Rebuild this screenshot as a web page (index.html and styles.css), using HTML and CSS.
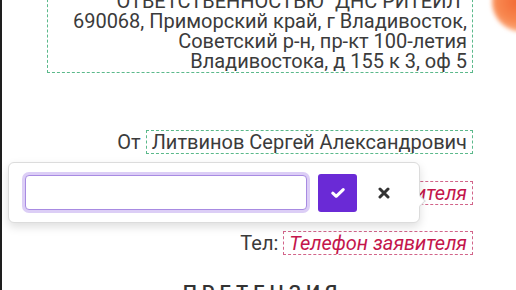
FILE: index.html
```html
<!DOCTYPE html>
<html lang="ru">
<head>
    <meta charset="UTF-8">
    <meta name="viewport" content="width=device-width, initial-scale=1.0">
    <title>Претензия</title>
    <link rel="stylesheet" href="styles.css">
</head>
<body>
    <!-- document sheet -->
    <div class="sheet">
        <div class="recipient">
            <div class="field field-filled">ОТВЕТСТВЕННОСТЬЮ "ДНС РИТЕЙЛ"<br>690068, Приморский край, г Владивосток,<br>Советский р-н, пр-кт 100-летия<br>Владивостока, д 155 к 3, оф 5</div>
        </div>

        <div class="row">
            <span class="label">От</span>
            <span class="field field-filled">Литвинов Сергей Александрович</span>
        </div>
        <div class="row">
            <span class="label">Адрес:</span>
            <span class="field field-empty">Адрес заявителя</span>
        </div>
        <div class="row">
            <span class="label">Тел:</span>
            <span class="field field-empty">Телефон заявителя</span>
        </div>

        <h2 class="title">ПРЕТЕНЗИЯ</h2>
    </div>

    <!-- inline editor popup over the field -->
    <div class="editor">
        <input type="text" class="editor-input">
        <button class="btn-ok" type="button">
            <svg width="14" height="10" viewBox="0 0 14 10"><path d="M1.8 5.2 L5.2 8.3 L12.2 1.6" fill="none" stroke="#fff" stroke-width="3" stroke-linecap="round" stroke-linejoin="round"/></svg>
        </button>
        <button class="btn-cancel" type="button">
            <svg width="12" height="12" viewBox="0 0 12 12"><path d="M2 2 L10 10 M10 2 L2 10" fill="none" stroke="#333" stroke-width="3" stroke-linecap="round"/></svg>
        </button>
    </div>

    <div class="fab"></div>
</body>
</html>
```

FILE: styles.css
```css
body {
    margin: 0;
    background-color: #fff;
    border-left: 2px solid #1e1e1e;
    height: 290px;
    overflow: hidden;
    position: relative;
    font-family: Roboto, "Noto Sans", sans-serif;
    color: #3b3b3b;
}

.sheet {
    padding: 0 43px 0 45px;
}

/* recipient block, top line is scrolled away */
.recipient {
    margin-top: -11px;
    text-align: right;
}

.field {
    font-size: 20px;
    line-height: 20px;
    padding: 1px 5px;
    border: 1px dashed #5bb98b;
}

.field-empty {
    color: #c4164c;
    font-style: italic;
    border-color: #d2648a;
}

.row {
    display: flex;
    justify-content: flex-end;
    align-items: center;
    gap: 5px;
    margin-top: 26.5px;
    font-size: 20px;
}

.recipient + .row {
    margin-top: 57px;
}

.label {
    line-height: 20px;
}

.title {
    margin: 26px 0 0;
    padding-left: 5px;
    text-align: center;
    font-size: 20px;
    line-height: 24px;
    font-weight: 500;
    letter-spacing: 5px;
    color: #333;
}

/* popup editor */
.editor {
    position: absolute;
    left: 6px;
    top: 162px;
    width: 394px;
    height: 59px;
    display: flex;
    align-items: center;
    padding-left: 16px;
    background: #fff;
    border: 1px solid #dcdcdc;
    border-radius: 6px;
    box-shadow: 0 4px 10px rgba(0, 0, 0, 0.13);
}

.editor::after {
    content: "";
    position: absolute;
    right: -5px;
    top: 34px;
    width: 7px;
    height: 7px;
    background: #fff;
    border-top: 1px solid #dcdcdc;
    border-right: 1px solid #dcdcdc;
    transform: rotate(45deg);
}

.editor-input {
    width: 282px;
    height: 35px;
    box-sizing: border-box;
    border: 1px solid #a88be2;
    border-radius: 4px;
    box-shadow: 0 0 0 3px #dccef6;
    outline: none;
    background: #fff;
}

.btn-ok {
    margin-left: 11px;
    width: 39px;
    height: 38px;
    border: none;
    border-radius: 3px;
    background-color: #6a2ad6;
    display: flex;
    align-items: center;
    justify-content: center;
    padding: 0;
}

.btn-cancel {
    margin-left: 7px;
    width: 40px;
    height: 38px;
    border: none;
    background: none;
    display: flex;
    align-items: center;
    justify-content: center;
    padding: 0;
}

.fab {
    position: absolute;
    right: -38px;
    top: -28px;
    width: 62px;
    height: 60px;
    border-radius: 50%;
    background: radial-gradient(circle at 40% 50%, #f26a35 0%, #f8874f 40%, #ffc39c 75%, rgba(255, 225, 205, 0) 100%);
    filter: blur(2px);
}
```
